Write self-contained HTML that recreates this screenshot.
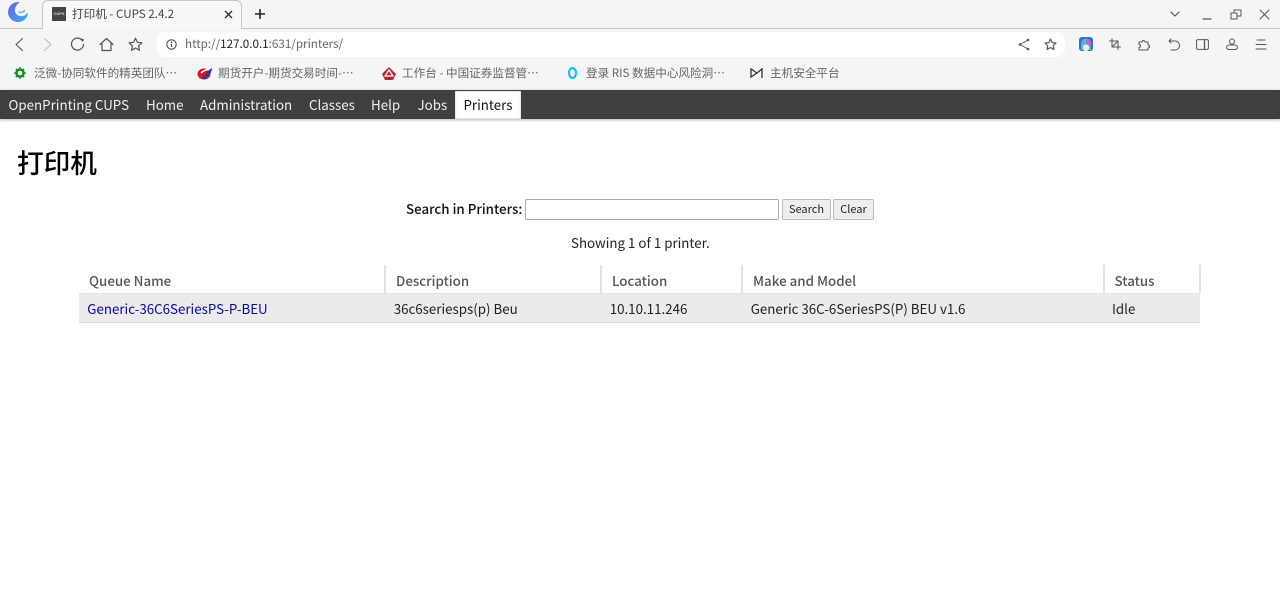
<!DOCTYPE html>
<html lang="zh">
<head>
<meta charset="utf-8">
<title>打印机 - CUPS 2.4.2</title>
<style>
html,body{margin:0;padding:0;width:1280px;height:597px;overflow:hidden;background:#fff;}
body{font-family:"Noto Sans CJK SC","Liberation Sans",sans-serif;position:relative;color:#111;}
.a{position:absolute;white-space:nowrap;line-height:1;}
svg{position:absolute;overflow:visible;}
.i{fill:none;stroke:#555;stroke-width:1.2;stroke-linecap:round;stroke-linejoin:round;}
.bm{font-size:11.6px;color:#666;top:67.500px;}
.nav{font-size:13.33px;color:#f0f0f0;top:98px;}
.th{font-size:13.33px;font-weight:500;color:#555;top:274px;}
.td{font-size:13.33px;color:#222;top:301.500px;}
.sep{position:absolute;top:265px;width:2px;height:28px;background:#e2e2e2;}
.btn{position:absolute;top:199px;height:19px;background:#eee;border:1px solid #bbb;border-radius:2px;font-size:11px;color:#222;text-align:center;line-height:19px;}
</style>
</head>
<body>
<!-- browser chrome -->
<div class="a" style="left:0;top:0;width:1280px;height:90px;background:#f4f5f7;"></div>
<div class="a" style="left:0;top:28px;width:1280px;height:1px;background:#c4c6c8;"></div>
<div class="a" style="left:42px;top:0;width:200px;height:29px;background:#f7f8fa;border:1px solid #c4c6c8;border-bottom:none;border-radius:6px 6px 0 0;box-sizing:border-box;"></div>
<svg style="left:8px;top:2px" width="20" height="20" viewBox="0 0 20 20">
<defs><linearGradient id="g" x1="0" y1="0" x2="1" y2="1"><stop offset="0" stop-color="#6a62e6"/><stop offset="1" stop-color="#35aef0"/></linearGradient></defs>
<path d="M12 .3A10 10 0 1 0 20 10.500C18 13.500 15 14.500 12 14 8.500 13.500 6.500 10.500 7 7.500 7.500 4 9.500 1.500 12 .3z" fill="url(#g)"/>
<path d="M11 10c1.500 1 4 .5 5.500-1.500" fill="none" stroke="#5cc0f4" stroke-width="1.500" stroke-linecap="round"/>
</svg>
<div class="a" style="left:52px;top:7px;width:14px;height:14px;background:#444;color:#ddd;font-size:4px;font-weight:700;line-height:14px;text-align:center;font-family:'Liberation Sans',sans-serif;">CUPS</div>
<div class="a" style="left:72px;top:8.500px;font-size:11.6px;color:#444;">打印机 - CUPS 2.4.2</div>
<svg style="left:224px;top:10px" width="9" height="9" viewBox="0 0 9 9"><path d="M1 1l7 7M8 1L1 8" stroke="#333" stroke-width="1.400" fill="none"/></svg>
<svg style="left:254px;top:8px" width="12" height="12" viewBox="0 0 12 12"><path d="M6 1v10M1 6h10" stroke="#222" stroke-width="1.600" fill="none"/></svg>
<svg style="left:1170px;top:11px" width="10" height="7" viewBox="0 0 10 7"><path d="M1 1l4 4 4-4" class="i"/></svg>
<svg style="left:1202px;top:14px" width="10" height="6" viewBox="0 0 10 6"><path d="M1 5h8" class="i"/></svg>
<svg style="left:1230px;top:9px" width="12" height="11" viewBox="0 0 12 11"><path d="M1 4h6v6H1zM4 3V1h7v6H8" class="i" style="stroke-width:1"/></svg>
<svg style="left:1259px;top:9px" width="11" height="11" viewBox="0 0 11 11"><path d="M1 1l9 9M10 1l-9 9" class="i" style="stroke-width:1"/></svg>

<svg style="left:13px;top:37px" width="12" height="15" viewBox="0 0 12 15"><path d="M9.500 1.500L3 7.500 9.500 13.500" class="i" style="stroke-width:1.100"/></svg>
<svg style="left:42px;top:37px" width="12" height="15" viewBox="0 0 12 15"><path d="M2.500 1.500l6.500 6-6.500 6" class="i" style="stroke:#bbb;stroke-width:1.100"/></svg>
<svg style="left:70px;top:37px" width="15" height="15" viewBox="0 0 15 15"><path d="M12.500 3.800A6 6 0 1 0 13.500 7.500" class="i"/><circle cx="12.500" cy="3" r="1.200" fill="#444"/></svg>
<svg style="left:99px;top:37px" width="15" height="15" viewBox="0 0 15 15"><path d="M1 7.500L7.500 1.500 14 7.500M3 6.500V13.500H12V6.500" class="i"/></svg>
<svg style="left:128px;top:37px" width="15" height="15" viewBox="0 0 15 15"><path d="M7.500 1.200l1.900 4.100 4.500.5-3.300 3 .9 4.500-4-2.300-4 2.300.9-4.500-3.300-3 4.500-.5z" class="i"/></svg>

<div class="a" style="left:157px;top:32px;width:908px;height:25px;background:#fff;border-radius:8px;"></div>
<svg style="left:166px;top:39px" width="11" height="11" viewBox="0 0 11 11"><circle cx="5.500" cy="5.500" r="4.700" class="i" style="stroke-width:1.100"/><path d="M5.500 5v3" stroke="#444" stroke-width="1.200"/><circle cx="5.500" cy="3.200" r=".8" fill="#444"/></svg>
<div class="a" style="left:185px;top:38px;font-size:11.65px;color:#666;">http://<span style="color:#222">127.0.0.1</span>:631/printers/</div>
<svg style="left:1018px;top:38px" width="12" height="13" viewBox="0 0 12 13"><path d="M10 2L2 6.500 10 11" class="i" style="stroke-width:1"/><circle cx="10" cy="2" r="1.300" fill="#555"/><circle cx="2" cy="6.500" r="1.300" fill="#555"/><circle cx="10" cy="11" r="1.300" fill="#555"/></svg>
<svg style="left:1044px;top:38px" width="13" height="13" viewBox="0 0 15 15"><path d="M7.500 1.200l1.900 4.100 4.500.5-3.300 3 .9 4.500-4-2.300-4 2.300.9-4.500-3.300-3 4.500-.5z" class="i" style="stroke-width:1.300"/></svg>
<svg style="left:1079px;top:37px" width="14" height="14" viewBox="0 0 14 14"><rect width="14" height="14" rx="3" fill="#2f6fd8"/><path d="M2 13V6.500a5 5 0 0 1 10 0V13z" fill="#4fc79a"/><path d="M7 1.500a5 5 0 0 1 5 5V10H7z" fill="#b76ad0"/><path d="M2 8a5 5 0 0 1 2-5l2 5z" fill="#4ab5e8"/><rect x="4" y="7.500" width="6" height="6.500" rx="2.500" fill="#e8ecf8"/></svg>
<svg style="left:1109px;top:38px" width="12" height="12" viewBox="0 0 12 12"><path d="M3 .5V9h8.500M.5 3H9v8.500M3 9l6-6" class="i" style="stroke-width:1"/></svg>
<svg style="left:1138px;top:38px" width="13" height="13" viewBox="0 0 13 13"><path d="M1 4h3a1.500 1.500 0 1 1 3 0h3v3a1.500 1.500 0 1 1 0 3v2H1v-2.500a1.500 1.500 0 1 0 0-3z" class="i" style="stroke-width:1"/></svg>
<svg style="left:1168px;top:38px" width="12" height="13" viewBox="0 0 12 13"><path d="M3 1L1 3l2 2M1 3h6a4 4 0 0 1 0 9H3" class="i" style="stroke-width:1"/></svg>
<svg style="left:1196px;top:39px" width="13" height="11" viewBox="0 0 13 11"><rect x=".6" y=".6" width="11.800" height="9.800" rx="1.500" class="i" style="stroke-width:1"/><path d="M8.500 .6v9.800" class="i" style="stroke-width:1.300"/></svg>
<svg style="left:1226px;top:38px" width="12" height="12" viewBox="0 0 12 12"><circle cx="6" cy="3.500" r="2.500" class="i" style="stroke-width:1"/><rect x=".6" y="7" width="10.800" height="4.500" rx="2.200" class="i" style="stroke-width:1"/></svg>
<svg style="left:1255px;top:39px" width="12" height="11" viewBox="0 0 12 11"><path d="M2 1h8M1 5.500h10M1 10h10" class="i" style="stroke-width:1"/></svg>

<!-- bookmarks -->
<svg style="left:14px;top:67px" width="12" height="12" viewBox="0 0 12 12"><circle cx="6" cy="6" r="3.600" fill="none" stroke="#138a1c" stroke-width="2.400"/><path d="M6 0v12M0 6h12M1.800 1.800l8.400 8.400M10.200 1.800l-8.400 8.400" stroke="#138a1c" stroke-width="1.300" stroke-dasharray="2 8 2 0"/></svg>
<div class="a bm" style="left:34px;">泛微-协同软件的精英团队…</div>
<svg style="left:197px;top:67px" width="15" height="13" viewBox="0 0 15 13"><ellipse cx="7" cy="7" rx="6.500" ry="5.500" fill="#e0101c"/><path d="M4 12C8 10 9 4 15 1c-.5 5-3 9-7 11z" fill="#1f3f9c"/><path d="M4 6c2-2 5-3.500 8-3.500" stroke="#fff" stroke-width="1.500" fill="none"/></svg>
<div class="a bm" style="left:218px;">期货开户-期货交易时间-…</div>
<svg style="left:382px;top:67px" width="14" height="13" viewBox="0 0 14 13"><path d="M7 0l3.500 3.500L14 7l-3 6H3L0 7l3.500-3.500z" fill="#b9252d"/><path d="M7 3L3 9h8z" fill="none" stroke="#fff" stroke-width="1.200"/></svg>
<div class="a bm" style="left:402px;">工作台 - 中国证券监督管…</div>
<svg style="left:567px;top:67px" width="11" height="13" viewBox="0 0 11 13"><ellipse cx="5.500" cy="6" rx="3.500" ry="5" fill="none" stroke="#15c5e8" stroke-width="2.200"/></svg>
<div class="a bm" style="left:586px;">登录 RIS 数据中心风险洞…</div>
<svg style="left:750px;top:68px" width="13" height="10" viewBox="0 0 13 10"><path d="M1 1v8l6-4zM12 0v10M12 1L7 5" fill="none" stroke="#333" stroke-width="1.300"/></svg>
<div class="a bm" style="left:770px;">主机安全平台</div>

<!-- CUPS nav -->
<div class="a" style="left:0;top:90px;width:1280px;height:29px;background:#404040;box-shadow:0 1px 3px rgba(0,0,0,.3);"></div>
<div class="a" style="left:455px;top:91px;width:66px;height:28px;background:#fff;box-shadow:inset 0 0 2px rgba(0,0,0,.25);"></div>
<div class="a nav" style="left:8.500px;">OpenPrinting CUPS</div>
<div class="a nav" style="left:146px;">Home</div>
<div class="a nav" style="left:200px;">Administration</div>
<div class="a nav" style="left:309px;">Classes</div>
<div class="a nav" style="left:371px;">Help</div>
<div class="a nav" style="left:417.500px;">Jobs</div>
<div class="a nav" style="left:463.500px;color:#111;">Printers</div>

<!-- content -->
<div class="a" style="left:17px;top:148.500px;font-size:26.67px;font-weight:500;color:#000;">打印机</div>
<div class="a" style="left:406px;top:201.500px;font-size:13.33px;font-weight:500;color:#111;">Search in Printers:</div>
<div class="a" style="left:525px;top:199px;width:254px;height:21px;box-sizing:border-box;background:#fff;border:1px solid #aaa;border-radius:2px;"></div>
<div class="btn" style="left:782px;width:47px;">Search</div>
<div class="btn" style="left:833px;width:39px;">Clear</div>
<div class="a" style="left:571px;top:235.500px;font-size:13.33px;color:#222;">Showing 1 of 1 printer.</div>

<!-- table -->
<div class="a" style="left:79px;top:293px;width:1121px;height:29px;background:#ebebeb;border-bottom:1px solid #ddd;"></div>
<div class="a" style="left:79px;top:293px;width:1121px;height:1px;background:#e2e2e2;"></div>
<div class="sep" style="left:384px;"></div>
<div class="sep" style="left:600px;"></div>
<div class="sep" style="left:741px;"></div>
<div class="sep" style="left:1103px;"></div>
<div class="sep" style="left:1199px;"></div>
<div class="a th" style="left:89px;">Queue Name</div>
<div class="a th" style="left:396px;">Description</div>
<div class="a th" style="left:612px;">Location</div>
<div class="a th" style="left:753px;">Make and Model</div>
<div class="a th" style="left:1114.500px;">Status</div>
<div class="a td" style="left:87.300px;color:#0a0a96;">Generic-36C6SeriesPS-P-BEU</div>
<div class="a td" style="left:393.700px;">36c6seriesps(p) Beu</div>
<div class="a td" style="left:609.700px;">10.10.11.246</div>
<div class="a td" style="left:750.700px;">Generic 36C-6SeriesPS(P) BEU v1.6</div>
<div class="a td" style="left:1112px;">Idle</div>
</body>
</html>
